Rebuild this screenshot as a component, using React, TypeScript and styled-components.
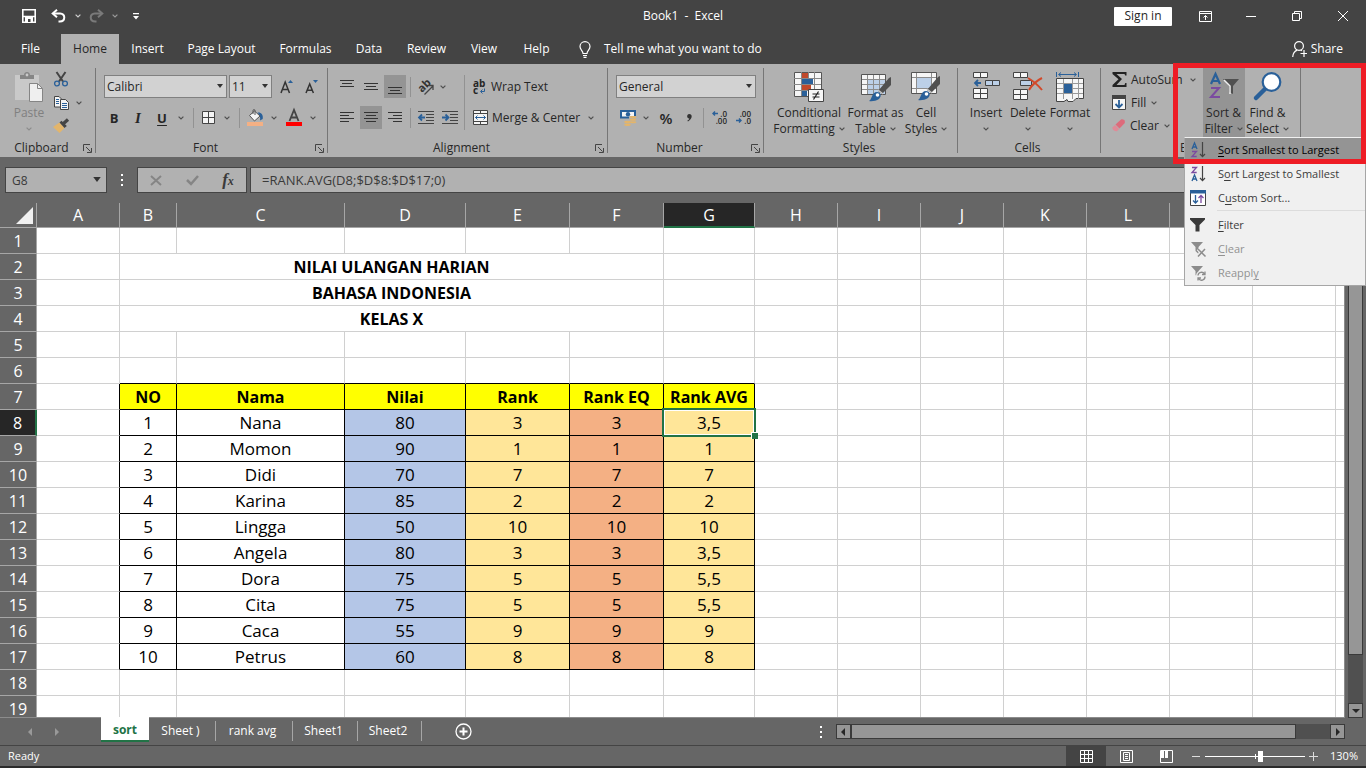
import React, { useEffect, useState } from "react";
import styled, { createGlobalStyle, css } from "styled-components";

const UI = `"Open Sans", "Noto Sans", sans-serif`;
const SHEET = `"Open Sans", "Noto Sans", sans-serif`;

const c = {
  bar: "#444444",
  ribbon: "#b1b1b1",
  frame: "#666666",
  pressed: "#949494",
  field: "#d2d2d2",
  ink: "#262626",
  line: "#767676",
  green: "#217346",
  blue: "#2a6099",
  grid: "#d0d0d0",
  head: "#a6a6a6",
};

const GlobalStyle = createGlobalStyle`
  * { box-sizing: border-box; }
  body { margin: 0; font-family: ${UI}; font-size: 12px; line-height: 16px; color: ${c.ink}; }
  button, input, select { font: inherit; color: inherit; }
  button { background: none; border: 0; padding: 0; white-space: nowrap; }
  svg { display: block; flex: none; overflow: visible; }
`;

const Window = styled.div`
  display: flex;
  flex-direction: column;
  height: 100vh;
  overflow: hidden;
  background: ${c.frame};
`;

/* ---------- Title bar ---------- */
const TitleBar = styled.header`
  display: grid;
  grid-template-columns: 1fr auto 1fr;
  align-items: center;
  height: 32px;
  background: ${c.bar};
  color: #fff;
`;
const QuickAccess = styled.div`
  display: flex;
  align-items: center;
  padding-left: 18px;
`;
const QuickButton = styled.button<{ $w: number }>`
  display: flex;
  justify-content: center;
  width: ${(p) => p.$w}px;
`;
const WindowTools = styled.div`
  display: flex;
  align-items: center;
  justify-content: flex-end;
`;
const SignIn = styled.button`
  width: 58px;
  height: 19px;
  margin-right: 10px;
  background: #fff;
  color: ${c.ink};
  border-radius: 1px;
`;
const WindowButton = styled.button`
  display: flex;
  align-items: center;
  justify-content: center;
  width: 46px;
  height: 30px;
`;

/* ---------- Ribbon tabs ---------- */
const Tabs = styled.nav`
  display: flex;
  align-items: flex-end;
  height: 32px;
  background: ${c.bar};
  color: #fff;
`;
const Tab = styled.button<{ $active?: boolean; $w: number }>`
  width: ${(p) => p.$w}px;
  height: 30px;
  ${(p) => p.$active && css`background: ${c.ribbon}; color: ${c.ink};`}
`;
const TellMe = styled.button`
  display: flex;
  align-items: center;
  gap: 13px;
  height: 30px;
  padding-left: 15px;
`;
const Share = styled.button`
  display: flex;
  align-items: center;
  gap: 4px;
  height: 30px;
  margin-left: auto;
  padding-right: 23px;
`;

/* ---------- Ribbon ---------- */
const Ribbon = styled.section`
  position: relative;
  display: flex;
  flex: none;
  height: 93px;
  padding: 4px 0;
  background: ${c.ribbon};
`;
const GroupBox = styled.div<{ $w: number }>`
  display: flex;
  flex-direction: column;
  flex: none;
  width: ${(p) => p.$w}px;
  border-right: 1px solid ${c.line};
`;
const GroupBody = styled.div<{ $pad?: number }>`
  display: flex;
  flex: none;
  height: 72px;
  padding-left: ${(p) => p.$pad ?? 8}px;
`;
const GroupTitle = styled.div`
  display: flex;
  align-items: center;
  flex: none;
  height: 16px;
  padding-right: 3px;
  span { flex: 1; text-align: center; }
`;
const Rows = styled.div`
  display: flex;
  flex-direction: column;
  gap: 8px;
  padding-top: 7px;
`;
const Row = styled.div`
  display: flex;
  align-items: center;
  height: 23px;
`;
const Tool = styled.button<{ $w?: number; $on?: boolean; $gap?: number }>`
  display: flex;
  align-items: center;
  justify-content: center;
  width: ${(p) => p.$w ?? 22}px;
  height: 23px;
  margin-right: ${(p) => p.$gap ?? 0}px;
  background: ${(p) => (p.$on ? c.pressed : "none")};
`;
const Letter = styled.span<{ $kind: "b" | "i" | "u" | "n" }>`
  font-size: 13px;
  font-weight: 700;
  ${(p) => p.$kind === "i" && css`font-family: "Liberation Serif", serif; font-style: italic; font-size: 15px;`}
  ${(p) => p.$kind === "u" && css`text-decoration: underline; text-underline-offset: 2px;`}
  ${(p) => p.$kind === "n" && css`font-size: 15px; font-weight: 600;`}
`;
const Divider = styled.i<{ $m: number; $tall?: boolean }>`
  width: 1px;
  height: ${(p) => (p.$tall ? 55 : 20)}px;
  margin: 0 ${(p) => p.$m}px;
  background: #929292;
`;
const Labelled = styled.button<{ $gap?: number }>`
  display: flex;
  align-items: center;
  height: 23px;
  gap: ${(p) => p.$gap ?? 4}px;
`;
const SelectBox = styled.div<{ $w: number }>`
  position: relative;
  width: ${(p) => p.$w}px;
  height: 23px;
  select {
    appearance: none;
    width: 100%;
    height: 100%;
    padding: 0 0 0 2px;
    background: ${c.field};
    border: 1px solid #808080;
    border-radius: 0;
  }
  svg { position: absolute; right: 4px; top: 9px; pointer-events: none; }
`;
const Combos = styled.div`
  display: flex;
  gap: 2px;
`;
const Big = styled.button<{ $w: number; $on?: boolean }>`
  display: flex;
  flex-direction: column;
  align-items: center;
  width: ${(p) => p.$w}px;
  height: 69px;
  padding-top: 4px;
  background: ${(p) => (p.$on ? c.pressed : "none")};
  color: inherit;
  svg { height: 33px; }
  &:disabled { color: #808080; }
`;
const BigLine = styled.span`
  display: flex;
  align-items: center;
  justify-content: center;
  gap: 4px;
  height: 16px;
  svg { height: 4px; }
`;
const Stack = styled.div`
  display: flex;
  flex-direction: column;
  align-items: flex-start;
`;

/* ---------- Menu over the ribbon ---------- */
const Menu = styled.div`
  position: absolute;
  z-index: 2;
  top: 73px;
  left: 1184px;
  width: 182px;
  display: flex;
  flex-direction: column;
  padding: 0;
  background: #f0f0f0;
  border: 1px solid #a6a6a6;
  border-top-color: #f0f0f0;
`;
const MenuItem = styled.button<{ $on?: boolean }>`
  display: flex;
  align-items: center;
  gap: 11px;
  height: 24px;
  padding-left: 4px;
  font-size: 11px;
  text-align: left;
  background: ${(p) => (p.$on ? c.pressed : "none")};
  color: ${(p) => (p.$on ? "#000" : "#3c3c3c")};
  &:disabled { color: #929292; }
  u { text-underline-offset: 2px; }
`;
const MenuRule = styled.hr`
  width: 148px;
  height: 1px;
  margin: 0 0 2px auto;
  border: 0;
  background: #dcdcdc;
`;
const Pic = styled.span`
  display: flex;
  justify-content: center;
  width: 18px;
`;
const Highlight = styled.div`
  position: absolute;
  z-index: 3;
  top: -1px;
  left: 1173px;
  width: 193px;
  height: 101px;
  border: 5px solid #ee1c25;
  pointer-events: none;
`;

/* ---------- Formula bar ---------- */
const FormulaBar = styled.div`
  display: flex;
  flex: none;
  height: 46px;
  padding: 10px 0 10px 5px;
  color: #3a3a3a;
`;
const barBox = css`
  height: 26px;
  background: ${c.ribbon};
  border: 1px solid ${c.bar};
`;
const NameBox = styled.div`
  position: relative;
  width: 102px;
  input { ${barBox} width: 100%; padding: 0 6px; border-radius: 0; }
  svg { position: absolute; right: 6px; top: 10px; }
`;
const BarDots = styled.div`
  display: flex;
  align-items: center;
  justify-content: center;
  width: 30px;
`;
const BarButtons = styled.div`
  ${barBox}
  display: flex;
  align-items: center;
  width: 110px;
  margin-right: 3px;
  button { display: flex; justify-content: center; flex: 1; }
`;
const Fx = styled.em`
  font-family: "Liberation Serif", serif;
  font-size: 17px;
  font-weight: 700;
  small { font-size: 12px; }
`;
const Formula = styled.input`
  ${barBox}
  flex: 1;
  min-width: 0;
  padding: 0 11px;
  font-size: 13px;
  border-right: 0;
  border-radius: 0;
`;

/* ---------- Sheet ---------- */
const SheetArea = styled.main`
  display: flex;
  flex: 1;
  min-height: 0;
`;
const SheetView = styled.div`
  flex: 1;
  min-width: 0;
  overflow: hidden;
  background: #fff;
  border-right: 1px solid #8c8c8c;
  border-bottom: 1px solid #8c8c8c;
`;
const SheetTable = styled.table`
  table-layout: fixed;
  width: 0;
  border-collapse: separate;
  border-spacing: 0;
  color: #000;
  font-family: ${SHEET};
  font-size: 17px;
  line-height: 24px;
  th, td { padding: 0; text-align: center; white-space: nowrap; overflow: visible; }
`;
const ColHead = styled.th<{ $on?: boolean }>`
  height: 25px;
  background: ${(p) => (p.$on ? c.ink : c.frame)};
  color: #fff;
  font-weight: 400;
  font-size: 16px;
  line-height: 20px;
  border-right: 1px solid ${c.head};
  border-bottom: ${(p) => (p.$on ? `2px solid ${c.green}` : `1px solid ${c.head}`)};
`;
const Corner = styled(ColHead)`
  svg { margin: 0 3px 0 auto; }
`;
const RowHead = styled.th<{ $on?: boolean }>`
  height: 26px;
  background: ${(p) => (p.$on ? c.ink : c.frame)};
  color: #fff;
  font-weight: 400;
  font-size: 16px;
  border-right: ${(p) => (p.$on ? `2px solid ${c.green}` : `1px solid ${c.head}`)};
  border-bottom: 1px solid ${c.head};
`;
const Cell = styled.td<{ $bg?: string; $right?: boolean; $bottom?: boolean; $bold?: boolean }>`
  position: relative;
  height: 26px;
  background: ${(p) => p.$bg ?? "#fff"};
  font-weight: ${(p) => (p.$bold ? 700 : 400)};
  font-size: ${(p) => (p.$bold ? 16 : 17)}px;
  border-right: 1px solid ${(p) => (p.$right ? "#000" : c.grid)};
  border-bottom: 1px solid ${(p) => (p.$bottom ? "#000" : c.grid)};
`;
const Selection = styled.div`
  position: absolute;
  z-index: 1;
  inset: -2px;
  border: 2px solid ${c.green};
  box-shadow: inset 0 0 0 1px #fff;
  &::after {
    content: "";
    position: absolute;
    right: -4px;
    bottom: -4px;
    width: 6px;
    height: 6px;
    background: ${c.green};
    border: solid #fff;
    border-width: 1px 0 0 1px;
  }
`;

/* ---------- Scroll bars ---------- */
const ScrollButton = styled.button`
  display: flex;
  align-items: center;
  justify-content: center;
  flex: none;
  width: 15px;
  height: 15px;
  background: #969696;
  border: 1px solid #3a3a3a;
`;
const VScroll = styled.div`
  display: flex;
  flex-direction: column;
  width: 15px;
  margin: 0 3px;
  background: #505050;
`;
const VThumb = styled.div`
  height: 90%;
  background: #969696;
  border: 1px solid #3a3a3a;
`;
const Track = styled.div`
  flex: 1;
  min-height: 0;
`;
const HScroll = styled.div`
  display: flex;
  flex: 1;
  height: 15px;
  margin: 6px 21px 0 0;
  background: #505050;
`;
const HThumb = styled.div`
  width: 93%;
  height: 15px;
  background: #969696;
  border: 1px solid #3a3a3a;
`;

/* ---------- Sheet tabs ---------- */
const TabStrip = styled.div`
  display: flex;
  flex: none;
  height: 28px;
  border-bottom: 1px solid ${c.bar};
  color: #fff;
`;
const TabList = styled.div`
  display: flex;
  width: 59%;
`;
const TabNav = styled.div`
  display: flex;
  align-items: center;
  gap: 19px;
  width: 101px;
  padding-left: 26px;
`;
const SheetTab = styled.button<{ $w: number; $on?: boolean }>`
  width: ${(p) => p.$w}px;
  ${(p) =>
    p.$on
      ? css`
          height: 25px;
          margin-top: -1px;
          padding-top: 2px;
          background: #fff;
          color: ${c.green};
          font-weight: 700;
          border-bottom: 2px solid ${c.green};
          position: relative;
        `
      : css`
          height: 20px;
          margin-top: 3px;
          padding-right: 3px;
          border-right: 1px solid ${c.head};
        `}
`;
const AddSheet = styled.button`
  display: flex;
  align-items: center;
  margin-left: 33px;
`;
const Dots = styled.div`
  display: flex;
  align-items: center;
  justify-content: center;
  width: 30px;
`;

/* ---------- Status bar ---------- */
const Status = styled.footer`
  display: flex;
  align-items: center;
  flex: none;
  height: 22px;
  padding: 0 8px;
  border-bottom: 2px solid #2b2b2b;
  color: #fff;
  font-size: 11px;
`;
const ViewButton = styled.button<{ $on?: boolean }>`
  display: flex;
  align-items: center;
  justify-content: center;
  width: 40px;
  height: 20px;
  background: ${(p) => (p.$on ? c.bar : "none")};
`;
const Spacer = styled.span`
  flex: 1;
`;
const ZoomControl = styled.label`
  display: flex;
  align-items: center;
  gap: 4px;
  margin: 0 12px 0 6px;
`;
const ZoomRange = styled.input`
  appearance: none;
  width: 100px;
  height: 12px;
  margin: 0;
  background: linear-gradient(#fff, #fff) center / 100% 1px no-repeat,
    linear-gradient(#fff, #fff) center / 1px 5px no-repeat;
  &::-webkit-slider-thumb {
    appearance: none;
    width: 5px;
    height: 11px;
    background: #fff;
    border-radius: 0;
  }
`;

/* ---------- Icons ---------- */
const Chev = ({ color = "#505050" }: { color?: string }) => (
  <svg width="6" height="4" viewBox="0 0 6 4" fill="none" stroke={color} strokeWidth="1.2"><path d="M.6.6 3 3 5.4.6" /></svg>
);
const Caret = ({ big }: { big?: boolean }) => (
  <svg width={big ? 8 : 6} height={big ? 5 : 4} viewBox="0 0 6 4" fill="#333"><path d="M0 0h6L3 4z" /></svg>
);
const Launcher = () => (
  <svg width="9" height="9" viewBox="0 0 9 9" fill="none" stroke="#444"><path d="M.5 7V.5H7M3 3l4.5 4.5M8.500 4v4.500H4" /></svg>
);
const ThreeDots = () => (
  <svg width="2" height="12" fill="#fff"><path d="M0 0h2v2H0zM0 5h2v2H0zM0 10h2v2H0z" /></svg>
);
const Save = () => (
  <svg width="14" height="14" fill="none" stroke="#fff" strokeWidth="1.600"><path d="M.8.800h12.400v12.400H.8zM1 7.500h12" /><path d="M3 8h8v6H3z" fill="#fff" stroke="none" /><path d="M6 10h2.500v3H6z" fill="#444" stroke="none" /></svg>
);
const Undo = ({ color, flip }: { color: string; flip?: boolean }) => (
  <svg width="15" height="14" viewBox="0 0 15 14" fill="none" stroke={color} strokeWidth="2">
    <g transform={flip ? "matrix(-1 0 0 1 15 0)" : undefined}><path d="M6 .8 1.700 4.500 6 8.200" /><path d="M2 4.500h7.200c5.500 0 5.500 8-.4 8H7.500" /></g>
  </svg>
);
const Customize = () => (
  <svg width="6" height="7" fill="#fff"><path d="M0 0h6v1.300H0zM0 3h6L3 6.500z" /></svg>
);
const RibbonOptions = () => (
  <svg width="13" height="11" fill="none" stroke="#fff"><path d="M.5.5h12v10H.5zM.5 2.500h12M6.500 9V4.500M4.500 6.500l2-2 2 2" /></svg>
);
const Bulb = () => (
  <svg width="12" height="17" fill="none" stroke="#fff" strokeWidth="1.200"><path d="M4 12.500C4 9.500 1 9 1 5.600 1 2.800 3.200.700 6 .700s5 2.100 5 4.900c0 3.400-3 3.900-3 6.900zM4 14.500h4M4.500 16.400h3" /></svg>
);
const Person = () => (
  <svg width="15" height="17" fill="none" stroke="#fff" strokeWidth="1.200"><circle cx="7" cy="5" r="4.400" /><path d="M.7 16c.3-4 2-6 4.500-6.900M8.500 9.200l1.500.6M12 9v7M8.500 12.500h6.500" /></svg>
);
const PasteIcon = () => (
  <svg width="28" height="32"><path d="M0 3h24v25H0z" fill="#c9c9c9" /><path d="M5 3h4c0-4 6-4 6 0h4v4H5z" fill="#858585" /><circle cx="12" cy="3" r="1.400" fill="#c9c9c9" /><path d="M14.500 11.500h8l5 5v13h-13z" fill="#efefef" stroke="#858585" /><path d="M22.500 11.500v5h5" fill="none" stroke="#858585" /></svg>
);
const Scissors = () => (
  <svg width="14" height="15" fill="none"><path d="M2.500 0 9 9.500M11.500 0 5 9.500" stroke="#444" strokeWidth="2" /><circle cx="3" cy="11.500" r="2.400" stroke={c.blue} strokeWidth="1.300" /><circle cx="11" cy="11.500" r="2.400" stroke={c.blue} strokeWidth="1.300" /></svg>
);
const Copy = () => (
  <svg width="15" height="14" stroke="#444" fill="#f4f4f4"><path d="M.5.5H5L7.500 3v8h-7z" /><path d="M6.500 3.500h5l3 3v7h-8z" /><path d="M2 3.500h3M2 5.500h3M2 7.500h3M8 7.500h5M8 9.500h5M8 11.500h5" stroke={c.blue} /></svg>
);
const Brush = () => (
  <svg width="16" height="14"><path d="M0 8 6.500 3.500 11.500 9 6.500 14z" fill="#e3b56b" /><path d="m6.500 3.500 2-1.800 5.300 5.300-2.300 2z" fill="#444" /><path d="m10.500 4.500 4.500-4" stroke="#444" strokeWidth="3.200" /></svg>
);
const GrowA = ({ down }: { down?: boolean }) => (
  <svg width="13" height="15" fill="none"><path d={down ? "M1 14 4.700 5l3.700 9M2.300 11.200h4.900" : "M1 14 5.200 3l4.300 11M2.300 10.500h5.800"} stroke="#333" strokeWidth="1.500" /><path d={down ? "M8 1h5l-2.500 3z" : "M8 4h5l-2.500-3z"} fill={c.blue} /></svg>
);
const Borders = () => (
  <svg width="13" height="13" fill="#f4f4f4" stroke="#444" strokeWidth="1"><path d="M.5.5h12v12H.5zM6.500 0v13M0 6.500h13" /></svg>
);
const Bucket = () => (
  <svg width="16" height="17"><path d="M0 13h16v4H0z" fill="#f4b084" /><path d="M10.500 3.500c3.500-.5 6 2 5.200 6.500l-2.700 1.500c.5-3 0-5-2.500-8" fill={c.blue} /><path d="m2.500 6.500 5-4.500 5.500 5-5.500 5z" fill="#f4f4f4" stroke="#555" /><path d="M6 5V1.500C6 .3 8 .3 8 1.500V6" fill="none" stroke="#555" /></svg>
);
const FontColor = () => (
  <svg width="16" height="17"><path d="M0 13h16v4H0z" fill="#f00" /><path d="M3.500 12 8 1l4.500 11M5 8.500h6" fill="none" stroke="#444" strokeWidth="1.800" /></svg>
);
type Line = [number, number, number];
const Lines = ({ xs }: { xs: Line[] }) => (
  <svg width="14" height="14" stroke="#333"><path d={xs.map(([x, y, w]) => `M${x} ${y + 0.5}h${w}`).join("")} /></svg>
);
const top3: Line[] = [[0, 0, 14], [2, 3, 10], [0, 6, 14]];
const shift = (n: number): Line[] => top3.map(([x, y, w]) => [x, y + n, w]);
const left4: Line[] = [[0, 1, 14], [0, 4, 9], [0, 7, 14], [0, 10, 9]];
const mid4: Line[] = [[0, 1, 14], [2, 4, 10], [0, 7, 14], [2, 10, 10]];
const right4: Line[] = [[0, 1, 14], [5, 4, 9], [0, 7, 14], [5, 10, 9]];
const Orientation = () => (
  <svg width="18" height="16" viewBox="0 0 18 16"><text x="0" y="0" transform="translate(5 14) rotate(-45)" fontSize="11" fontWeight="700" fill="#333">ab</text><path d="m7.500 15.500 8-8M11.500 6.500h4.500v4.500" stroke="#444" fill="none" strokeWidth="1.300" /></svg>
);
const Indent = ({ right }: { right?: boolean }) => (
  <svg width="16" height="13" fill="none"><path d="M0 .5h16M8 3.500h8M8 6.500h8M8 9.500h8M0 12.500h16" stroke="#444" /><path d={right ? "M0 6.500h6M3.500 3.500l3 3-3 3" : "M7 6.500H1M4 3.500l-3 3 3 3"} stroke={c.blue} strokeWidth="1.800" /></svg>
);
const WrapIcon = () => (
  <svg width="13" height="16" viewBox="0 0 13 16"><g fontSize="10" fontWeight="700" fill="#262626"><text x="0" y="8">ab</text><text x="0" y="15">c</text></g><path d="M11.500 9.500v3H8M9.500 10.500l-2 2 2 2" fill="none" stroke={c.blue} /></svg>
);
const MergeIcon = () => (
  <svg width="15" height="15" fill="#f4f4f4"><path d="M.5.5h14v14H.5zM.5 3.500h14M.5 11.500h14M7.500 0v3.500M7.500 11.500V15" stroke="#444" /><path d="M2.500 7.500h10M4.500 5.500l-2 2 2 2M10.500 5.500l2 2-2 2" fill="none" stroke={c.blue} /></svg>
);
const Money = () => (
  <svg width="17" height="16"><path d="M0 0h16v8.500H0z" fill={c.blue} /><path d="M2 2h12v4.500H2z" fill="#f4f4f4" /><circle cx="8" cy="4.200" r="2.200" fill={c.blue} /><path d="M9 6h8v5H9zM4 11h7v5H4z" fill="#b1b1b1" /><g fill="#e3b56b"><ellipse cx="13" cy="7.200" rx="3.300" ry="1.300" /><ellipse cx="13" cy="9.800" rx="3.300" ry="1" /><ellipse cx="13" cy="12.200" rx="3.300" ry="1" /><ellipse cx="7.500" cy="12" rx="3.300" ry="1.200" /><ellipse cx="7.500" cy="14.700" rx="3.300" ry="1.200" /></g></svg>
);
const CommaIcon = () => (
  <svg width="5" height="8" fill="#333"><path d="M2.200 0C5.500 0 6 4.500 1 7.500L.3 6.700C2 5.700 2.300 5 2.200 4.400 -.5 4.400-.5 0 2.200 0z" /></svg>
);
const Decimals = ({ less }: { less?: boolean }) => (
  <svg width="16" height="15" viewBox="0 0 16 15"><g fontSize="8" fontWeight="600" fill="#262626" textAnchor="end"><text x="15" y="7">{less ? ".00" : ".0"}</text><text x="15" y="14">{less ? ".0" : ".00"}</text></g><path d={less ? "M0 10.500h5M3 8.500l2 2-2 2" : "M6 3.500H1M3 1.500l-2 2 2 2"} fill="none" stroke={c.blue} strokeWidth="1.400" /></svg>
);
const CondIcon = () => (
  <svg width="30" height="32"><path d="M.5.500h27v24H.5z" fill="#f6f6f6" stroke="#555" /><path d="M0 6.500h27M0 12.500h27M0 18.500h27M7.500 0v24M14.500 0v24M20.500 0v24" stroke="#888" /><path d="M8 1h6v5H8zM8 13h9v5H8z" fill="#c0492b" /><path d="M8 7h11v5H8zM8 19h5v5H8z" fill={c.blue} /><path d="M14.500 17.500h15v12h-15z" fill="#f6f6f6" stroke="#444" /><path d="M18.500 22h7M18.500 25h7M24.500 19.500l-5 8" stroke="#222" strokeWidth="1.200" /></svg>
);
const PaintBrush = () => (
  <g><path d="m17 19 11-13 2-1v8l-9 9z" fill="#505050" /><path d="m17 18 5 4" stroke="#c8c8c8" strokeWidth="1.500" /><path d="M8 29c3-1 2.500-9 8-9 4 0 5 4 2 7-3 2-7 2.500-10 2" fill={c.blue} /><circle cx="16.500" cy="23" r="1.800" fill="#fff" /></g>
);
const FormatTable = () => (
  <svg width="30" height="32"><path d="M.5 2.500h24v20H.5z" fill="#f6f6f6" /><path d="M7 8h18v14H7z" fill="#bcd0e8" /><path d="M.5 7.500h24M.5 12.500h24M.5 17.500h24M6.500 2.500v20M12.500 2.500v20M18.500 2.500v20" stroke="#8c8c8c" /><path d="M.5 2.500h24v20H.5z" fill="none" stroke="#555" /><PaintBrush /></svg>
);
const CellStyles = () => (
  <svg width="30" height="32"><path d="M.5.500h25v21H.5z" fill="#f6f6f6" stroke="#555" /><path d="M6 6h14v10H6z" fill="#bcd0e8" /><path d="M1 5.500h24M1 16.500h24M5.500 1v20M20.500 1v20" stroke="#8c8c8c" /><g transform="translate(-1 -1)"><PaintBrush /></g></svg>
);
const boxes = (x: number, y: number, rows: number) =>
  Array.from({ length: rows }, (_, r) => `M${x} ${y + r * 5}h7v5h-7zM${x + 7} ${y + r * 5}h7v5h-7z`).join("");
const InsertIcon = () => (
  <svg width="27" height="32"><path d={boxes(0.5, 0.5, 1) + boxes(0.5, 16.5, 2)} fill="#f6f6f6" stroke="#444" /><path d="M12.500 8.500h7v5h-7zM19.500 8.500h7v5h-7z" fill="#bcd0e8" stroke="#444" /><path d="M8 11H2M5 8l-3 3 3 3" fill="none" stroke={c.blue} strokeWidth="1.800" /></svg>
);
const DeleteIcon = () => (
  <svg width="30" height="32"><path d={boxes(0.5, 0.5, 1) + boxes(0.5, 17.5, 2)} fill="#f6f6f6" stroke="#444" /><path d="M7.500 8.500h11v5h-11z" fill="#bcd0e8" stroke="#444" /><path d="M15 6c5 3 10 7 14 12M29 6c-6 3-10 7-13 12" stroke="#d2492a" strokeWidth="2" fill="none" /></svg>
);
const FormatIcon = () => (
  <svg width="28" height="32"><path d="M.5 6.500h27v20H20l-3 3h-5l-1-2-3 2H.5z" fill="#f6f6f6" stroke="#444" /><path d="M1 11.500h26M1 21.500h26M7.500 7v20M16.500 7v20M22.500 7v20M1 16.500h26" stroke="#999" /><path d="M8 12h8v9H8z" fill={c.blue} /><path d="M.5 0v5M22.500 0v5M3 2.500h17M5 .5l-2.500 2L5 4.500M18 .5l2.500 2-2.500 2" stroke={c.blue} fill="none" /></svg>
);
const Sigma = () => (
  <svg width="15" height="15"><path d="M14.500 3.500V0H.5v2l6 5.200L.5 13v2h14v-4h-1.200l-.8 2H4.500L10 7 4.500 2h8l.7 1.500z" fill="#222" /></svg>
);
const FillIcon = () => (
  <svg width="14" height="15"><path d="M.5.5h13v14H.5z" fill="#f6f6f6" stroke="#444" /><path d="M0 0h14v4H0z" fill="#444" /><path d="M7 5v8M3.500 9 7 12.500 10.500 9" stroke={c.blue} strokeWidth="1.800" fill="none" /></svg>
);
const Eraser = () => (
  <svg width="13" height="13"><path d="M3.500 5.500 9 .5c1-.8 3.700 0 3.800 1.500v2L7.500 9.500z" fill="#dd6b7b" /><path d="m3 6 4 4-2 2.200C3 12.500.5 11.500.3 8.500z" fill="#e08a97" /></svg>
);
const SortGlyph = ({ z }: { z?: boolean }) => (
  <svg width="14" height="16" viewBox="0 0 14 16"><path d={z ? "M1 15 3.500 9 6 15M2 13h3" : "M1 7 3.500 1 6 7M2 5h3"} fill="none" stroke={c.blue} strokeWidth="1.300" /><path d={z ? "M1 1.500h4.500L1 6.500h4.700" : "M1 9.500h4.500L1 14.500h4.700"} fill="none" stroke="#7b4ba0" strokeWidth="1.300" /><path d="M11.500 0v14.500M9 12l2.500 2.700 2.500-2.700" fill="none" stroke="#444" strokeWidth="1.200" /></svg>
);
const SortFilterIcon = () => (
  <svg width="30" height="32" fill="none"><path d="M2 12 6.500 2 11 12M3.500 9h6" stroke={c.blue} strokeWidth="2.200" /><path d="M2 16h8L2 25h9" stroke="#7b4ba0" strokeWidth="2" /><path d="M14 7h16l-6 7v8l-4-2v-6z" fill="#505050" /><path d="m15 8 6 6v8" stroke="#eee" strokeWidth="1.500" /></svg>
);
const FindIcon = () => (
  <svg width="28" height="32"><path d="m11 17-9 9" stroke={c.blue} strokeWidth="4.500" strokeLinecap="round" /><circle cx="17.500" cy="10" r="8.800" fill="#fff" stroke={c.blue} strokeWidth="2.200" /></svg>
);
const CustomSort = () => (
  <svg width="16" height="16"><path d="M.5.5h15v15H.5z" fill="#fff" stroke="#444" /><path d="M0 0h16v3.500H0z" fill={c.blue} /><path d="M5.500 5v8M3 10.500 5.500 13 8 10.500" fill="none" stroke={c.blue} strokeWidth="1.300" /><path d="M11 13V6M8.500 8 11 5.500 13.500 8" fill="none" stroke="#7b4ba0" strokeWidth="1.300" /></svg>
);
const Funnel = ({ kind }: { kind?: "clear" | "reapply" }) => (
  <svg width="16" height="16" viewBox="0 0 16 16" fill="none">
    {kind ? <path d="M1 1h12L8.500 6v7L5.500 10V6z" fill="#8c8c8c" /> : <path d="M0 1h15v1.500L9.500 8v6.500h-4V8L0 2.500z" fill="#3a3a3a" />}
    {kind === "clear" && <path d="m8 8 7.500 7.500M15 8l-7 7.500" stroke="#f0f0f0" strokeWidth="3.500" />}
    {kind === "clear" && <path d="m8 8 7.500 7.500M15 8l-7 7.500" stroke="#8c8c8c" strokeWidth="1.500" />}
    {kind === "reapply" && <circle cx="11.500" cy="11" r="5.500" fill="#f0f0f0" />}
    {kind === "reapply" && <path d="M8 10.500a3.500 3.500 0 0 1 6.500-1.500M15 11.500a3.500 3.500 0 0 1-6.500 2M15 6.500V9.500h-3M8 15.500v-2.500h3" stroke="#8c8c8c" strokeWidth="1.300" />}
  </svg>
);
const Plus = () => (
  <svg width="17" height="17" fill="none" stroke="#fff"><circle cx="8.500" cy="8.500" r="7.500" strokeWidth="1.300" /><path d="M8.500 4.500v8M4.500 8.500h8" strokeWidth="2" /></svg>
);
const Arrow = ({ dir, color = "#262626" }: { dir: "l" | "r" | "u" | "d"; color?: string }) => {
  const d = { l: "M6 0v8L2 4z", r: "M2 0v8l4-4z", u: "M0 6h8L4 2z", d: "M0 2h8L4 6z" }[dir];
  return <svg width="8" height="8" fill={color}><path d={d} /></svg>;
};

/* ---------- Ribbon groups ---------- */
function Group(p: { title: string; w: number; pad?: number; launch?: boolean; children: React.ReactNode }) {
  return (
    <GroupBox $w={p.w}>
      <GroupBody $pad={p.pad}>{p.children}</GroupBody>
      <GroupTitle>
        <span>{p.title}</span>
        {p.launch && <button aria-label={`${p.title} settings`}><Launcher /></button>}
      </GroupTitle>
    </GroupBox>
  );
}
function Combo({ label, value, w }: { label: string; value: string; w: number }) {
  return (
    <SelectBox $w={w}>
      <select aria-label={label} defaultValue={value}><option>{value}</option></select>
      <Caret />
    </SelectBox>
  );
}
function BigButton(p: { icon: React.ReactNode; a: string; b?: string; w: number; on?: boolean; disabled?: boolean }) {
  return (
    <Big $w={p.w} $on={p.on} disabled={p.disabled}>
      {p.icon}
      <BigLine>{p.a}</BigLine>
      <BigLine>{p.b}<Chev color={p.disabled ? "#8c8c8c" : undefined} /></BigLine>
    </Big>
  );
}

/* ---------- Sheet data ---------- */
const namedWidths = [83, 57, 168, 121, 104, 94, 91];
const letter = (i: number) => String.fromCharCode(65 + i);
const titles: Record<number, string> = { 2: "NILAI ULANGAN HARIAN", 3: "BAHASA INDONESIA", 4: "KELAS X" };
const heads = ["NO", "Nama", "Nilai", "Rank", "Rank EQ", "Rank AVG"];
const fills = [undefined, undefined, "#b4c6e7", "#ffe699", "#f4b084", "#ffe699"];
const data = [
  ["1", "Nana", "80", "3", "3", "3,5"],
  ["2", "Momon", "90", "1", "1", "1"],
  ["3", "Didi", "70", "7", "7", "7"],
  ["4", "Karina", "85", "2", "2", "2"],
  ["5", "Lingga", "50", "10", "10", "10"],
  ["6", "Angela", "80", "3", "3", "3,5"],
  ["7", "Dora", "75", "5", "5", "5,5"],
  ["8", "Cita", "75", "5", "5", "5,5"],
  ["9", "Caca", "55", "9", "9", "9"],
  ["10", "Petrus", "60", "8", "8", "8"],
];

/* Enough rows and columns to fill the window, whatever its size. */
const measure = () => ({
  rows: Math.max(19, Math.ceil((window.innerHeight - 279) / 26)),
  extra: Math.min(19, Math.max(1, Math.ceil((window.innerWidth - 755) / 83))),
});
function useSheetSize() {
  const [size, setSize] = useState(measure);
  useEffect(() => {
    const update = () => setSize(measure());
    window.addEventListener("resize", update);
    return () => window.removeEventListener("resize", update);
  }, []);
  return size;
}

function SheetRow({ n, count }: { n: number; count: number }) {
  const cells: React.ReactNode[] = [];
  for (let i = 0; i < count; i++) {
    if (titles[n] && i === 1) {
      cells.push(<Cell key={i} colSpan={5} $bold>{titles[n]}</Cell>);
      i = 5;
      continue;
    }
    const inCols = i >= 1 && i <= 6;
    const inRows = n >= 7 && n <= 17;
    const head = n === 7 && inCols;
    const body = n >= 8 && inRows && inCols;
    cells.push(
      <Cell
        key={i}
        $bold={head}
        $bg={head ? "#ffff00" : body ? fills[i - 1] : undefined}
        $right={inRows && i <= 6}
        $bottom={inCols && n >= 6 && n <= 17}
      >
        {head ? heads[i - 1] : body ? data[n - 8][i - 1] : null}
        {n === 8 && i === 6 && <Selection />}
      </Cell>
    );
  }
  return <tr><RowHead scope="row" $on={n === 8}>{n}</RowHead>{cells}</tr>;
}

export default function App() {
  const { rows, extra } = useSheetSize();
  const widths = [...namedWidths, ...Array(extra).fill(83)];
  return (
    <Window>
      <GlobalStyle />
      <TitleBar>
        <QuickAccess>
          <QuickButton $w={22} aria-label="Save"><Save /></QuickButton>
          <QuickButton $w={36} aria-label="Undo"><Undo color="#fff" /></QuickButton>
          <QuickButton $w={4} aria-label="Undo list"><Chev color="#ccc" /></QuickButton>
          <QuickButton $w={32} aria-label="Redo"><Undo color="#7a7a7a" flip /></QuickButton>
          <QuickButton $w={6} aria-label="Redo list"><Chev color="#999" /></QuickButton>
          <QuickButton $w={36} aria-label="Customize"><Customize /></QuickButton>
        </QuickAccess>
        <span>Book1&nbsp; -&nbsp; Excel</span>
        <WindowTools>
          <SignIn>Sign in</SignIn>
          <WindowButton aria-label="Ribbon display"><RibbonOptions /></WindowButton>
          <WindowButton aria-label="Minimize"><svg width="10" height="1"><path d="M0 0h10v1H0z" fill="#fff" /></svg></WindowButton>
          <WindowButton aria-label="Restore"><svg width="10" height="10" fill="none" stroke="#fff"><path d="M.5 2.500h7v7h-7zM2.500 2.500v-2h7v7h-2" /></svg></WindowButton>
          <WindowButton aria-label="Close"><svg width="10" height="10" stroke="#fff"><path d="m0 0 10 10M10 0 0 10" /></svg></WindowButton>
        </WindowTools>
      </TitleBar>

      <Tabs>
        <Tab $w={61}>File</Tab>
        <Tab $w={58} $active>Home</Tab>
        <Tab $w={57}>Insert</Tab>
        <Tab $w={91}>Page Layout</Tab>
        <Tab $w={77}>Formulas</Tab>
        <Tab $w={50}>Data</Tab>
        <Tab $w={65}>Review</Tab>
        <Tab $w={50}>View</Tab>
        <Tab $w={55}>Help</Tab>
        <TellMe><Bulb />Tell me what you want to do</TellMe>
        <Share><Person />Share</Share>
      </Tabs>

      <Ribbon>
        <Group title="Clipboard" w={96} launch>
          <BigButton icon={<PasteIcon />} a="Paste" w={42} disabled />
          <Stack>
            <Tool $w={22} aria-label="Cut"><Scissors /></Tool>
            <Row><Tool $w={22} aria-label="Copy"><Copy /></Tool><Tool $w={14} aria-label="Copy options"><Chev /></Tool></Row>
            <Tool $w={22} aria-label="Format painter"><Brush /></Tool>
          </Stack>
        </Group>

        <Group title="Font" w={232} launch>
          <Rows>
            <Row>
              <Combos>
                <Combo label="Font" value="Calibri" w={123} />
                <Combo label="Font size" value="11" w={43} />
              </Combos>
              <Tool $w={28} aria-label="Grow font"><GrowA /></Tool>
              <Tool $w={22} aria-label="Shrink font"><GrowA down /></Tool>
            </Row>
            <Row>
              <Tool $w={20}><Letter $kind="b">B</Letter></Tool>
              <Tool $w={28}><Letter $kind="i">I</Letter></Tool>
              <Tool $w={20}><Letter $kind="u">U</Letter></Tool>
              <Tool $w={18} aria-label="Underline options"><Chev /></Tool>
              <Divider $m={3} />
              <Tool $w={22} aria-label="Borders"><Borders /></Tool>
              <Tool $w={16} aria-label="Border options"><Chev /></Tool>
              <Divider $m={4} />
              <Tool $w={22} aria-label="Fill color"><Bucket /></Tool>
              <Tool $w={16} aria-label="Fill options"><Chev /></Tool>
              <Tool $w={24} aria-label="Font color"><FontColor /></Tool>
              <Tool $w={14} aria-label="Font color options"><Chev /></Tool>
            </Row>
          </Rows>
        </Group>

        <Group title="Alignment" w={280} launch>
          <Rows>
            <Row>
              <Tool $gap={2} aria-label="Top align"><Lines xs={shift(0)} /></Tool>
              <Tool $gap={2} aria-label="Middle align"><Lines xs={shift(3)} /></Tool>
              <Tool $on aria-label="Bottom align"><Lines xs={shift(7)} /></Tool>
              <Divider $m={4} />
              <Tool aria-label="Orientation"><Orientation /></Tool>
              <Tool $w={12} aria-label="Orientation options"><Chev /></Tool>
            </Row>
            <Row>
              <Tool $gap={2} aria-label="Align left"><Lines xs={left4} /></Tool>
              <Tool $gap={2} $on aria-label="Center"><Lines xs={mid4} /></Tool>
              <Tool aria-label="Align right"><Lines xs={right4} /></Tool>
              <Divider $m={4} />
              <Tool $gap={2} aria-label="Decrease indent"><Indent /></Tool>
              <Tool $gap={3} aria-label="Increase indent"><Indent right /></Tool>
            </Row>
          </Rows>
          <Rows><Divider $m={0} $tall /></Rows>
          <GroupBody $pad={8}>
            <Rows>
              <Labelled $gap={5}><WrapIcon />Wrap Text</Labelled>
              <Row>
                <Labelled><MergeIcon />Merge &amp; Center</Labelled>
                <Tool $w={22} aria-label="Merge options"><Chev /></Tool>
              </Row>
            </Rows>
          </GroupBody>
        </Group>

        <Group title="Number" w={156} launch>
          <Rows>
            <Combo label="Number format" value="General" w={140} />
            <Row>
              <Tool $w={24} aria-label="Accounting format"><Money /></Tool>
              <Tool $w={12} aria-label="Currency options"><Chev /></Tool>
              <Tool $w={28}><Letter $kind="n">%</Letter></Tool>
              <Tool $w={18} aria-label="Comma style"><CommaIcon /></Tool>
              <Divider $m={5} />
              <Tool $w={22} $gap={2} aria-label="Increase decimal"><Decimals /></Tool>
              <Tool $w={22} aria-label="Decrease decimal"><Decimals less /></Tool>
            </Row>
          </Rows>
        </Group>

        <Group title="Styles" w={194} pad={7}>
          <BigButton icon={<CondIcon />} a="Conditional" b="Formatting" w={76} />
          <BigButton icon={<FormatTable />} a="Format as" b="Table" w={57} />
          <BigButton icon={<CellStyles />} a="Cell" b="Styles" w={44} />
        </Group>

        <Group title="Cells" w={143} pad={7}>
          <BigButton icon={<InsertIcon />} a="Insert" w={42} />
          <BigButton icon={<DeleteIcon />} a="Delete" w={42} />
          <BigButton icon={<FormatIcon />} a="Format" w={42} />
        </Group>

        <Group title="Editing" w={200} pad={11}>
          <Stack>
            <Row>
              <Labelled><Sigma />AutoSum</Labelled>
              <Tool $w={20} aria-label="AutoSum options"><Chev /></Tool>
            </Row>
            <Labelled $gap={5}><FillIcon />Fill <Chev /></Labelled>
            <Labelled $gap={5}><Eraser />Clear <Chev /></Labelled>
          </Stack>
          <BigButton icon={<SortFilterIcon />} a="Sort &amp;" b="Filter" w={42} on />
          <BigButton icon={<FindIcon />} a="Find &amp;" b="Select" w={46} />
        </Group>

        <Menu role="menu">
          <MenuItem role="menuitem" $on><Pic><SortGlyph /></Pic><span><u>S</u>ort Smallest to Largest</span></MenuItem>
          <MenuItem role="menuitem"><Pic><SortGlyph z /></Pic><span>S<u>o</u>rt Largest to Smallest</span></MenuItem>
          <MenuItem role="menuitem"><Pic><CustomSort /></Pic><span>C<u>u</u>stom Sort...</span></MenuItem>
          <MenuRule />
          <MenuItem role="menuitem"><Pic><Funnel /></Pic><span><u>F</u>ilter</span></MenuItem>
          <MenuItem role="menuitem" disabled><Pic><Funnel kind="clear" /></Pic><span><u>C</u>lear</span></MenuItem>
          <MenuItem role="menuitem" disabled><Pic><Funnel kind="reapply" /></Pic><span>Reappl<u>y</u></span></MenuItem>
        </Menu>
        <Highlight />
      </Ribbon>

      <FormulaBar>
        <NameBox><input aria-label="Name box" defaultValue="G8" /><Caret big /></NameBox>
        <BarDots><ThreeDots /></BarDots>
        <BarButtons>
          <button aria-label="Cancel"><svg width="12" height="11" stroke="#858585" strokeWidth="2"><path d="m1 1 10 9M11 1 1 10" /></svg></button>
          <button aria-label="Enter"><svg width="13" height="11" fill="none" stroke="#858585" strokeWidth="2.500"><path d="m1 5 4 4 7-8" /></svg></button>
          <button aria-label="Insert function"><Fx>f<small>x</small></Fx></button>
        </BarButtons>
        <Formula aria-label="Formula" defaultValue="=RANK.AVG(D8;$D$8:$D$17;0)" />
      </FormulaBar>

      <SheetArea>
        <SheetView>
          <SheetTable>
            <colgroup>
              <col width={37} />
              {widths.map((w, i) => <col key={i} width={w} />)}
            </colgroup>
            <thead>
              <tr>
                <Corner aria-label="Select all"><svg width="17" height="17" fill="#f0f0f0"><path d="M17 0v17H0z" /></svg></Corner>
                {widths.map((_, i) => <ColHead key={i} scope="col" $on={i === 6}>{letter(i)}</ColHead>)}
              </tr>
            </thead>
            <tbody>{Array.from({ length: rows }, (_, i) => <SheetRow key={i} n={i + 1} count={widths.length} />)}</tbody>
          </SheetTable>
        </SheetView>
        <VScroll>
          <ScrollButton aria-label="Scroll up"><Arrow dir="u" /></ScrollButton>
          <Track><VThumb /></Track>
          <ScrollButton aria-label="Scroll down"><Arrow dir="d" /></ScrollButton>
        </VScroll>
      </SheetArea>

      <TabStrip>
        <TabList>
          <TabNav><Arrow dir="l" color="#999" /><Arrow dir="r" color="#999" /></TabNav>
          <SheetTab $w={48} $on>sort</SheetTab>
          <SheetTab $w={67}>Sheet )</SheetTab>
          <SheetTab $w={77}>rank avg</SheetTab>
          <SheetTab $w={65}>Sheet1</SheetTab>
          <SheetTab $w={64}>Sheet2</SheetTab>
          <AddSheet aria-label="New sheet"><Plus /></AddSheet>
        </TabList>
        <Dots><ThreeDots /></Dots>
        <HScroll>
          <ScrollButton aria-label="Scroll left"><Arrow dir="l" /></ScrollButton>
          <Track><HThumb /></Track>
          <ScrollButton aria-label="Scroll right"><Arrow dir="r" /></ScrollButton>
        </HScroll>
      </TabStrip>

      <Status>
        <span>Ready</span>
        <Spacer />
        <ViewButton $on aria-label="Normal"><svg width="13" height="13" fill="none" stroke="#fff"><path d="M.5.5h12v12H.5zM.5 4.500h12M.5 8.500h12M4.500.500v12M8.500.500v12" /></svg></ViewButton>
        <ViewButton aria-label="Page layout"><svg width="13" height="13" fill="none" stroke="#fff"><path d="M.5.5h12v12H.5zM3.500 2.500h6v8h-6zM5 4.500h3M5 6.500h3M5 8.500h3" /></svg></ViewButton>
        <ViewButton aria-label="Page break preview"><svg width="13" height="13" fill="none" stroke="#fff"><path d="M.5.5h12v12H.5z" /><path d="M1 1h3v7H1zM5 1h3v7H5z" fill="#fff" stroke="none" /></svg></ViewButton>
        <ZoomControl>
          <svg width="9" height="9"><path d="M0 4h8v1H0z" fill="#ddd" /></svg>
          <ZoomRange type="range" aria-label="Zoom" min={0} max={100} defaultValue={56} />
          <svg width="9" height="9"><path d="M0 4h9v1H0zM4 0h1v9H4z" fill="#ddd" /></svg>
        </ZoomControl>
        <span>130%</span>
      </Status>
    </Window>
  );
}
